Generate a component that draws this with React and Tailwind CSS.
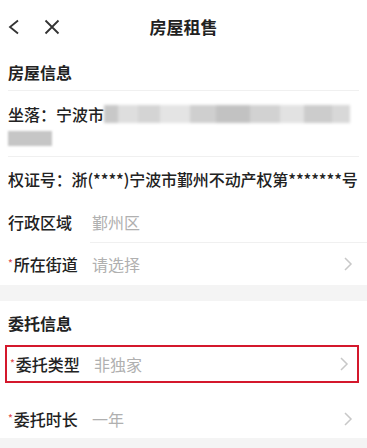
import React from "react";

const font = { fontFamily: '"Noto Sans CJK SC", "Noto Sans", sans-serif' };

function Chevron() {
  return (
    <svg className="w-[10px] h-[16px]" viewBox="0 0 10 16" fill="none" stroke="#c8c8c8" strokeWidth="1.5">
      <path d="M2 2l6 6-6 6" />
    </svg>
  );
}

function Row({ label, value, required, arrow, className = "" }) {
  return (
    <div className={`flex items-center pl-[8px] pr-[14px] ${className}`}>
      <div className="w-[84px] text-[16px] font-medium text-[#222] flex items-center">
        {required && <span className="text-[#e05050] text-[10px] -mt-1 mr-[1px]">*</span>}
        {label}
      </div>
      <div className="flex-1 text-[16px] text-[#b0b0b0]">{value}</div>
      {arrow && <Chevron />}
    </div>
  );
}

export default function App() {
  return (
    <div className="w-[367px] h-[448px] bg-white overflow-hidden" style={font}>
      {/* Navbar */}
      <div className="h-[54px] grid grid-cols-[1fr_auto_1fr] items-center px-[8px]">
        <div className="flex items-center gap-[24px]">
          <svg className="w-[12px] h-[16px]" viewBox="0 0 12 16" fill="none" stroke="#333" strokeWidth="1.8">
            <path d="M10 1.5L2 8l8 6.5" />
          </svg>
          <svg className="w-[16px] h-[16px]" viewBox="0 0 16 16" fill="none" stroke="#333" strokeWidth="1.8">
            <path d="M1.5 1.5l13 13M14.5 1.5l-13 13" />
          </svg>
        </div>
        <div className="text-[17px] font-bold text-[#222]">房屋租售</div>
        <div />
      </div>

      {/* 房屋信息 */}
      <div className="h-[36px] flex items-center px-[8px] text-[16px] font-bold text-[#222]">房屋信息</div>
      <div className="mx-[8px] h-px bg-[#f0f0f0]" />
      <div className="pt-[11px] pb-[9px] px-[8px] h-[65px]">
        <div className="flex items-center h-[24px] text-[16px] font-medium text-[#222]">
          <span>坐落：宁波市</span>
          <div className="flex h-[18px] blur-[1.5px]">
            <div className="w-[14px] bg-[#c8c8c8]" />
            <div className="w-[20px] bg-[#dedede]" />
            <div className="w-[22px] bg-[#d4d4d4]" />
            <div className="w-[30px] bg-[#e4e4e4]" />
            <div className="w-[26px] bg-[#cfcfcf]" />
            <div className="w-[34px] bg-[#c2c2c2]" />
            <div className="w-[30px] bg-[#d2d2d2]" />
            <div className="w-[24px] bg-[#e2e2e2]" />
            <div className="w-[28px] bg-[#cccccc]" />
            <div className="w-[18px] bg-[#d8d8d8]" />
          </div>
        </div>
        <div className="h-[24px] flex items-center">
          <div className="w-[44px] h-[15px] bg-[#c6c6c6] blur-[1px]" />
        </div>
      </div>
      <div className="mx-[8px] h-px bg-[#f0f0f0]" />
      <div className="h-[44px] flex items-center px-[8px] text-[16px] font-medium text-[#222] tracking-[-0.1px]">
        权证号：浙(****)宁波市鄞州不动产权第*******号
      </div>
      <Row label="行政区域" value="鄞州区" className="h-[41px]" />
      <div className="ml-[90px] h-px bg-[#f0f0f0]" />
      <Row label="所在街道" value="请选择" required arrow className="h-[42px]" />

      <div className="h-[16px] bg-[#f4f4f4]" />

      {/* 委托信息 */}
      <div className="h-[44px] flex items-center px-[8px] text-[16px] font-bold text-[#222]">委托信息</div>
      <div className="mx-[5px] w-[354px] border-2 border-[#d4182c]">
        <Row label="委托类型" value="非独家" required arrow className="h-[34px] !pl-[3px] !pr-[8px]" />
      </div>
      <Row label="委托时长" value="一年" required arrow className="h-[55px] pt-[17px]" />
      <div className="h-[14px] bg-[#f4f4f4]" />
    </div>
  );
}
